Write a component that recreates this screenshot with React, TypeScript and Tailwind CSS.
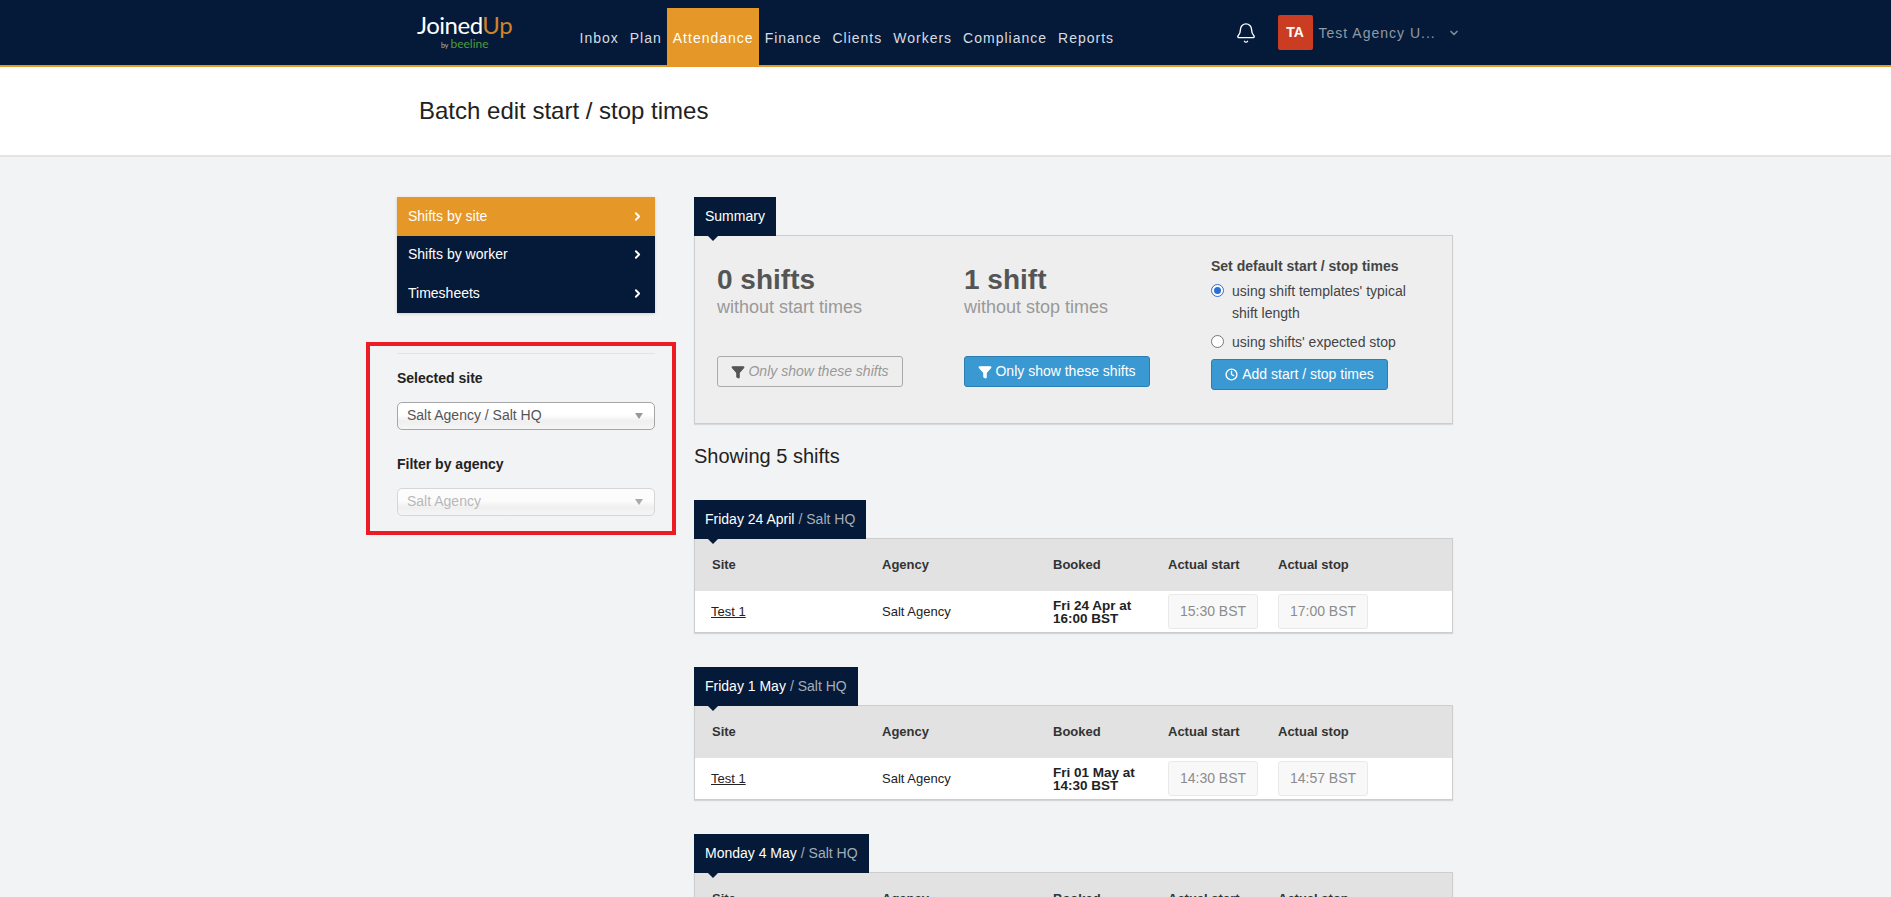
import { Bell, ChevronDown, ChevronRight, Clock, Filter } from "lucide-react"

const navItems = ["Inbox", "Plan", "Attendance", "Finance", "Clients", "Workers", "Compliance", "Reports"]

const shiftGroups = [
  { day: "Friday 24 April", booked: "Fri 24 Apr at", bookedTime: "16:00 BST", start: "15:30 BST", stop: "17:00 BST" },
  { day: "Friday 1 May", booked: "Fri 01 May at", bookedTime: "14:30 BST", start: "14:30 BST", stop: "14:57 BST" },
  { day: "Monday 4 May", booked: "", bookedTime: "", start: "", stop: "" },
]

function Tab({ children }: { children: React.ReactNode }) {
  return (
    <div className="relative z-10 -mb-px w-fit bg-[#051a38] px-[11px] h-[39px] flex items-center text-[14px] text-white">
      {children}
      <span className="absolute left-[14px] top-full h-0 w-0 border-x-[5px] border-t-[5px] border-x-transparent border-t-[#051a38]" />
    </div>
  )
}

function SideLink({ label, active }: { label: string; active?: boolean }) {
  return (
    <div className={`flex h-[38.5px] items-center justify-between pl-[11px] pr-[11px] text-[14px] text-white ${active ? "bg-[#e59727]" : "bg-[#051a38]"}`}>
      {label}
      <ChevronRight size={13} strokeWidth={3.5} />
    </div>
  )
}

function SelectBox({ value, disabled }: { value: string; disabled?: boolean }) {
  return (
    <div className={`flex h-[28px] items-center justify-between rounded-[5px] border pl-[9px] pr-[11px] text-[14px] bg-[linear-gradient(#ffffff_45%,#efefef_70%,#f6f6f6)] ${disabled ? "border-[#cfcfcf] text-[#aaaaaa] opacity-80" : "border-[#a6a6a6] text-[#555555]"}`}>
      {value}
      <span className="h-0 w-0 border-x-[4px] border-t-[6px] border-x-transparent border-t-[#999999]" />
    </div>
  )
}

function ShiftGroup({ day, booked, bookedTime, start, stop }: (typeof shiftGroups)[number]) {
  return (
    <section>
      <Tab>
        {day}
        <span className="ml-1 text-[#a3adb9]">/ Salt HQ</span>
      </Tab>
      <div className="border border-[#cdcdcd] bg-white shadow-[0_1px_1px_rgba(0,0,0,0.12)]">
        <div className="flex h-[52px] items-center bg-[#e2e2e2] text-[13px] font-bold text-[#333333]">
          <div className="w-[187px] pl-[17px]">Site</div>
          <div className="w-[171px]">Agency</div>
          <div className="w-[115px]">Booked</div>
          <div className="w-[110px]">Actual start</div>
          <div>Actual stop</div>
        </div>
        {booked ? (
          <div className="flex h-[41px] items-center text-[13px] text-[#222222]">
            <div className="w-[187px] pl-[16px] underline">Test 1</div>
            <div className="w-[171px]">Salt Agency</div>
            <div className="w-[115px] text-[13.5px] leading-[13px] font-bold">
              {booked}
              <br />
              {bookedTime}
            </div>
            <div className="w-[110px]">
              <TimeInput value={start} />
            </div>
            <TimeInput value={stop} />
          </div>
        ) : null}
      </div>
    </section>
  )
}

function TimeInput({ value }: { value: string }) {
  return (
    <div className="flex h-[35px] w-[90px] items-center justify-center rounded-[3px] border border-[#e9e9e9] bg-[#f8f8f8] text-[14px] text-[#8c8c8c]">
      {value}
    </div>
  )
}

function SummaryColumn({ count, caption, muted }: { count: string; caption: string; muted?: boolean }) {
  return (
    <div className="flex w-[247px] flex-col">
      <p className="mt-[28px] text-[28px] leading-[32px] font-bold text-[#555555]">{count}</p>
      <p className="text-[18px] leading-[22px] text-[#999999]">{caption}</p>
      {muted ? (
        <button className="mt-[38px] flex h-[31px] w-[186px] items-center justify-center gap-[3px] rounded-[3px] border border-[#aaaaaa] text-[14px] text-[#999999] italic">
          <Filter size={14} fill="#555555" stroke="#555555" />
          Only show these shifts
        </button>
      ) : (
        <button className="mt-[38px] flex h-[31px] w-[186px] items-center justify-center gap-[3px] rounded-[3px] border border-[#2a7fb0] bg-[#3a99d2] text-[14px] text-white">
          <Filter size={14} fill="#ffffff" />
          Only show these shifts
        </button>
      )}
    </div>
  )
}

export default function App() {
  return (
    <div className="h-[897px] overflow-hidden bg-[#f2f3f5] font-['Liberation_Sans',Arial,sans-serif]">
      <header className="h-[67px] border-b-2 border-[#e59727] bg-[#051a38]">
        <div className="flex h-[65px] items-start pl-[417px]">
          <div className="w-[157px] pt-[11px]">
            <p className="font-['Lato',sans-serif] text-[24px] leading-[28px] tracking-[-0.5px] text-white">
              Joined<span className="text-[#d2812b]">Up</span>
            </p>
            <p className="-mt-[1px] ml-[24px] flex items-baseline gap-[2px] font-['Lato',sans-serif] text-[12px] leading-[12px] text-[#4f9a3c]">
              <span className="text-[7px] text-[#bbbbbb]">by</span>
              beeline
            </p>
          </div>
          <nav className="mt-[8px] flex h-[57px] text-[14px] tracking-[1px] text-[#d8dce2]">
            {navItems.map((item) => (
              <div
                key={item}
                className={`flex items-center px-[5.5px] pt-[3px] ${item === "Attendance" ? "bg-[#e59727] text-white" : ""}`}
              >
                {item}
              </div>
            ))}
          </nav>
          <Bell className="mt-[22px] ml-[115px] text-white" size={22} strokeWidth={1.5} />
          <div className="mt-[15px] ml-[21px] flex h-[35px] w-[35px] items-center justify-center rounded-[2px] bg-[#cb3d22] text-[14px] font-bold text-white">
            TA
          </div>
          <span className="mt-[24px] ml-[6px] text-[14px] leading-[18px] tracking-[1px] text-[#8e9aa8]">Test Agency U...</span>
          <ChevronDown className="mt-[27px] ml-[12px] text-[#7f8a97]" size={12} strokeWidth={3.5} />
        </div>
      </header>

      <div className="flex h-[90px] items-center border-b-2 border-[#e3e4e6] bg-white pl-[419px]">
        <h1 className="text-[24px] text-[#222222]">Batch edit start / stop times</h1>
      </div>

      <main className="flex pt-[40px] pl-[397px]">
        <aside className="relative w-[258px]">
          <div className="shadow-[0_1px_3px_rgba(0,0,0,0.15)]">
            <SideLink label="Shifts by site" active />
            <SideLink label="Shifts by worker" />
            <SideLink label="Timesheets" />
          </div>
          <div className="mt-[40px] border-t border-[#e2e3e6] pt-[14px]">
            <p className="text-[14px] font-bold text-[#222222]">Selected site</p>
            <div className="mt-[13px]">
              <SelectBox value="Salt Agency / Salt HQ" />
            </div>
            <p className="mt-[24px] text-[14px] font-bold text-[#222222]">Filter by agency</p>
            <div className="mt-[13px]">
              <SelectBox value="Salt Agency" disabled />
            </div>
          </div>
          <div className="absolute top-[145px] -left-[31px] h-[193px] w-[310px] border-4 border-[#ed1c24]" />
        </aside>

        <div className="ml-[39px] w-[759px]">
          <Tab>Summary</Tab>
          <div className="flex h-[189px] border border-[#cdcdcd] bg-[#eeeeee] pl-[22px] shadow-[0_1px_1px_rgba(0,0,0,0.1)]">
            <SummaryColumn count="0 shifts" caption="without start times" muted />
            <SummaryColumn count="1 shift" caption="without stop times" />
            <div className="pt-[21px] text-[14px] text-[#444444]">
              <p className="font-bold leading-[18px] text-[#444444]">Set default start / stop times</p>
              <div className="mt-[5px] flex">
                <span className="mt-[4px] flex h-[13px] w-[13px] items-center justify-center rounded-full border border-[#2a6fd6] bg-white">
                  <span className="h-[7px] w-[7px] rounded-full bg-[#2a6fd6]" />
                </span>
                <span className="ml-[8px] w-[190px] leading-[22px]">using shift templates' typical shift length</span>
              </div>
              <div className="mt-[7px] flex">
                <span className="mt-[4px] h-[13px] w-[13px] rounded-full border border-[#777777] bg-white" />
                <span className="ml-[8px] leading-[22px]">using shifts' expected stop</span>
              </div>
              <button className="mt-[6px] flex h-[31px] w-[177px] items-center justify-center gap-[4px] rounded-[3px] border border-[#2a7fb0] bg-[#3a99d2] text-white">
                <Clock size={13} strokeWidth={2.5} />
                Add start / stop times
              </button>
            </div>
          </div>

          <h2 className="mt-[20px] text-[20px] leading-[24px] text-[#222222]">Showing 5 shifts</h2>

          <div className="mt-[32px] flex flex-col gap-[34px]">
            {shiftGroups.map((group) => (
              <ShiftGroup key={group.day} {...group} />
            ))}
          </div>
        </div>
      </main>
    </div>
  )
}
